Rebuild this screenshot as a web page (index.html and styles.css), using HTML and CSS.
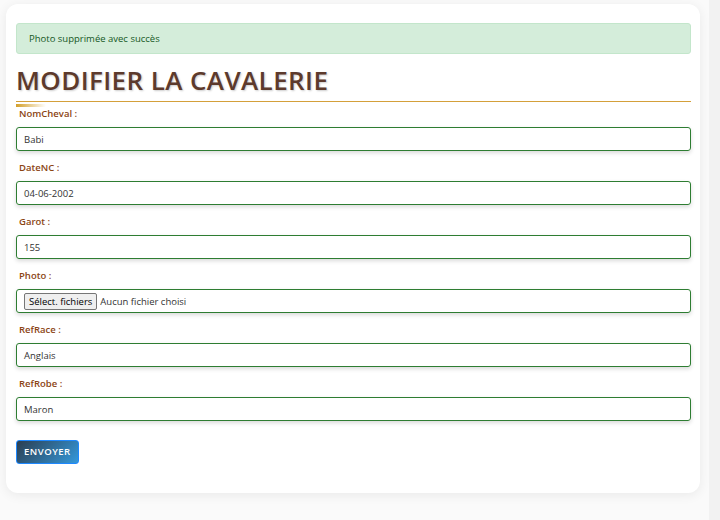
FILE: index.html
```html
<!DOCTYPE html>
<html lang="fr">
<head>
<meta charset="utf-8">
<title>Modifier la cavalerie</title>
<link rel="stylesheet" href="styles.css">
</head>
<body>
<div class="page">
  <main class="card">
    <div class="alert">Photo supprimée avec succès</div>
    <h1 class="title">MODIFIER LA CAVALERIE</h1>
    <div class="accent"></div>
    <form class="form">
      <div class="group">
        <label class="label">NomCheval :</label>
        <div class="field">Babi</div>
      </div>
      <div class="group">
        <label class="label">DateNC :</label>
        <div class="field">04-06-2002</div>
      </div>
      <div class="group">
        <label class="label">Garot :</label>
        <div class="field">155</div>
      </div>
      <div class="group">
        <label class="label">Photo :</label>
        <div class="field file"><span class="file-btn">Sélect. fichiers</span><span class="file-name">Aucun fichier choisi</span></div>
      </div>
      <div class="group">
        <label class="label">RefRace :</label>
        <div class="field">Anglais</div>
      </div>
      <div class="group">
        <label class="label">RefRobe :</label>
        <div class="field">Maron</div>
      </div>
      <div class="actions">
        <span class="submit">ENVOYER</span>
      </div>
    </form>
  </main>
</div>
<div class="strip"></div>
</body>
</html>
```
FILE: styles.css
```css
html, body {
  margin: 0;
  height: 100%;
}
body {
  display: flex;
  background: #fafafa;
  font-family: "Open Sans", "Noto Sans", sans-serif;
  overflow: hidden;
}
.page {
  width: 709px;
  padding: 4px 0 0 6px;
  box-sizing: border-box;
}
.strip {
  flex: 1;
  background: #f2f2f2;
}
.card {
  width: 694px;
  height: 489px;
  box-sizing: border-box;
  background: #fff;
  border-radius: 12px;
  box-shadow: 0 2px 12px rgba(0, 0, 0, 0.07);
  padding: 19px 9px 0 10px;
}
.alert {
  background: #d4edda;
  border: 1px solid #c3e6cb;
  border-radius: 3px;
  color: #155724;
  font-size: 9.5px;
  line-height: 13px;
  padding: 8px 12px;
  margin-bottom: 8px;
}
.title {
  margin: 0;
  font-size: 26px;
  line-height: 36px;
  font-weight: 600;
  letter-spacing: 0.4px;
  color: #5d3a2c;
  text-shadow: 1px 1px 2px rgba(0, 0, 0, 0.2);
  padding-bottom: 3px;
  border-bottom: 1px solid #d4a03a;
}
.accent {
  width: 30px;
  height: 3px;
  margin-top: 2px;
  background: linear-gradient(90deg, #d4a02a, rgba(212, 160, 42, 0));
}
.group {
  margin-bottom: 10px;
}
.label {
  display: block;
  font-size: 9.5px;
  line-height: 14px;
  font-weight: 600;
  color: #8b4513;
  padding-left: 3px;
  margin-bottom: 6px;
}
.field {
  height: 24px;
  box-sizing: border-box;
  border: 1px solid #2e7d32;
  border-radius: 3px;
  box-shadow: 0 2px 4px rgba(0, 0, 0, 0.15);
  padding: 0 7px;
  font-size: 9.5px;
  color: #333;
  display: flex;
  align-items: center;
}
.field.file {
  padding-left: 7px;
}
.file-btn {
  background: #efefef;
  border: 1px solid #767676;
  border-radius: 2px;
  color: #000;
  font-size: 9.5px;
  line-height: 15px;
  padding: 0 4px;
  margin-right: 3px;
}
.file-name {
  color: #333;
}
.actions {
  padding-top: 7px;
}
.submit {
  display: inline-block;
  height: 24px;
  line-height: 22px;
  box-sizing: border-box;
  padding: 0 7px;
  border: 1px solid #1e88ff;
  border-radius: 3px;
  background: linear-gradient(135deg, #2c3e50, #3498db);
  color: #fff;
  font-size: 9.5px;
  font-weight: 600;
  letter-spacing: 0.5px;
}
```
